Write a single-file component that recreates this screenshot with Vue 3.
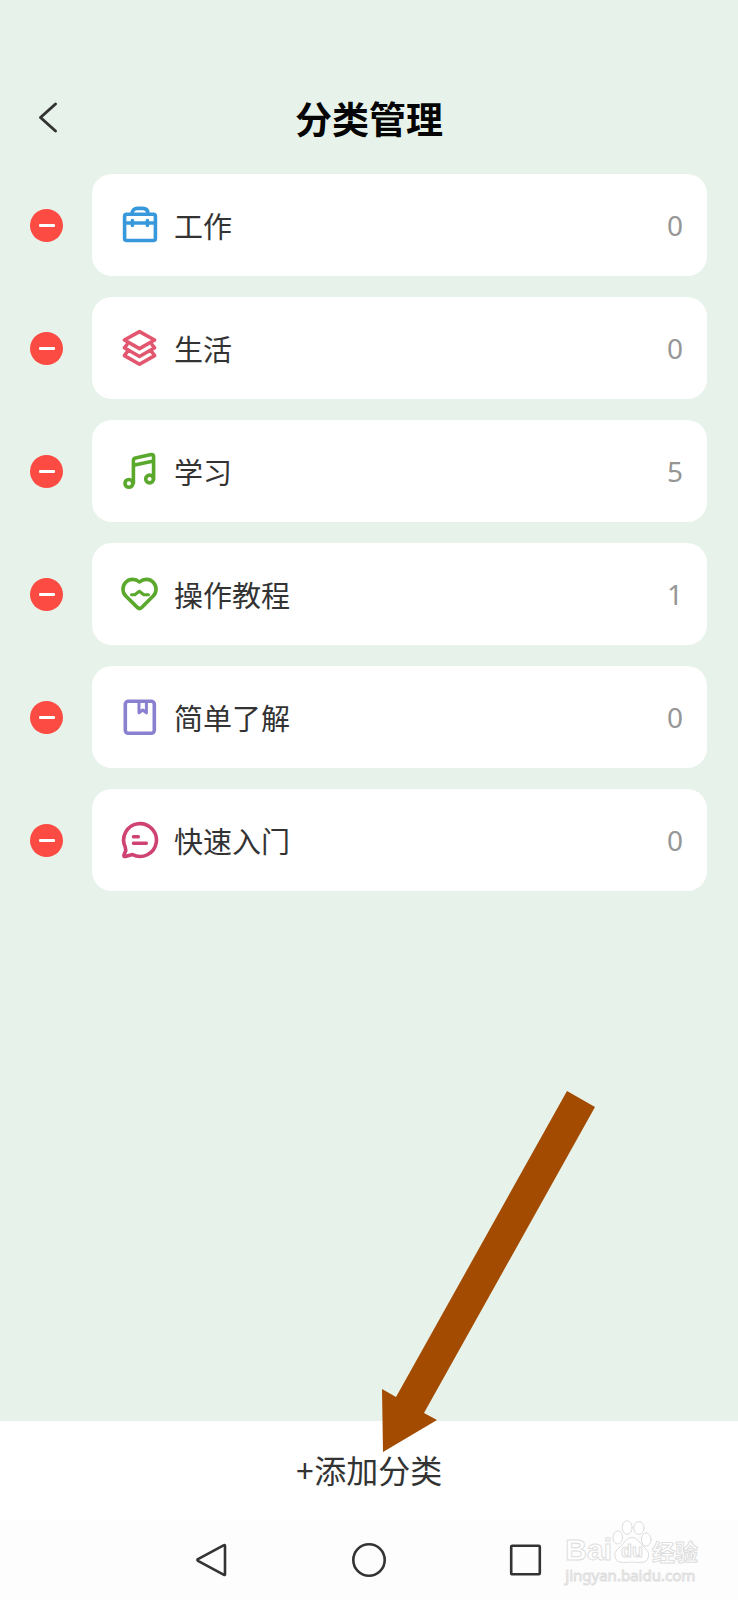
<script setup>
import { ref } from 'vue'

const categories = ref([
  { id: 'work', name: '工作', count: 0 },
  { id: 'life', name: '生活', count: 0 },
  { id: 'study', name: '学习', count: 5 },
  { id: 'guide', name: '操作教程', count: 1 },
  { id: 'basics', name: '简单了解', count: 0 },
  { id: 'start', name: '快速入门', count: 0 },
])

function removeCategory(id) {
  categories.value = categories.value.filter((c) => c.id !== id)
}
</script>

<template>
  <div class="page">
    <header class="header">
      <button class="back" type="button" aria-label="返回">
        <svg viewBox="0 0 24 34" width="24" height="34">
          <path d="M19.5 3 4.5 16.5 19.5 30" />
        </svg>
      </button>
      <h1 class="title">分类管理</h1>
    </header>

    <main class="main">
      <ul class="list">
        <li v-for="c in categories" :key="c.id" class="row">
          <button class="remove" type="button" :aria-label="'删除' + c.name" @click="removeCategory(c.id)"></button>
          <div class="card">
            <svg class="icon" :class="c.id" viewBox="0 0 40 40" aria-hidden="true">
              <g v-if="c.id === 'work'">
                <rect x="4.6" y="9.3" width="30.8" height="26.2" rx="2" />
                <path d="M12 9C12 5.2 14.4 3.4 17.4 3.4H22.6C25.8 3.4 28 5.2 28 9M5 18H35M12.4 15.6V20.4M27.4 15.6V20.4" />
              </g>
              <g v-else-if="c.id === 'life'">
                <path d="M19.5 3.6 34.6 12 19.5 20.6 4.4 12Z" />
                <path d="M7 16.6 4.4 19.8 19.5 28.5 34.6 19.8 32 16.6M7 24.2 4.4 27.6 19.5 36.3 34.6 27.6 32 24.2" />
              </g>
              <g v-else-if="c.id === 'study'">
                <circle cx="8.9" cy="32.4" r="3.9" />
                <circle cx="29.6" cy="28" r="3.9" />
                <path d="M13.4 32V9.5Q13.4 7.4 15.4 7L31.2 3.6Q33.6 3.2 33.6 5.5V28M13.4 14.2 33.6 10" />
              </g>
              <g v-else-if="c.id === 'guide'">
                <path d="M19.5 8C15.5 4.5 9.5 4.3 5.8 8.2 2 12.3 2 18 5.8 22L17.3 33.4Q19.5 35.6 21.7 33.4L33.2 22C37 18 37 12.3 33.2 8.2 29.5 4.3 23.5 4.5 19.5 8Z" />
                <path class="fine" d="M11.5 20.7H14.8L19.3 17.2 23.8 20.7H28.5" />
              </g>
              <g v-else-if="c.id === 'basics'">
                <rect x="5.3" y="4.3" width="29" height="32" rx="3" />
                <path class="fine" d="M19 4.5V15.8L22.7 13 26.4 15.8V4.5" />
              </g>
              <g v-else>
                <path d="M5.2 27A16.4 16.4 0 1 1 12.5 34.6L5.3 36.5Q3.6 36.8 3.9 35.2L5.8 30.5Z" />
                <path d="M13.5 16.8H18.3M13.5 23.3H26.3" />
              </g>
            </svg>
            <span class="name">{{ c.name }}</span>
            <span class="count">{{ c.count }}</span>
          </div>
        </li>
      </ul>
    </main>

    <footer class="footer">
      <button class="add" type="button">+添加分类</button>
      <nav class="nav" aria-label="系统导航">
        <button type="button" aria-label="后退">
          <svg viewBox="0 0 36 36" width="36" height="36">
            <path d="M30 3.2Q31 2.6 31 3.8V32.2Q31 33.4 30 32.8L4 18.8Q2.8 18 4 17.2Z" />
          </svg>
        </button>
        <button type="button" aria-label="主页">
          <svg viewBox="0 0 36 36" width="36" height="36"><circle cx="18" cy="18" r="15.7" /></svg>
        </button>
        <button type="button" aria-label="最近任务">
          <svg viewBox="0 0 36 36" width="36" height="36"><rect x="3.2" y="3.7" width="28.6" height="28.6" rx="1" /></svg>
        </button>
      </nav>

      <svg class="arrow" viewBox="0 0 213 361" aria-hidden="true">
        <path d="M185 0 213 16 42 322 55 329 1 361 0 298 14 306Z" />
      </svg>

      <div class="mark">
        <div class="brand">
          <span class="bai">Bai</span>
          <span class="paw">
            <svg viewBox="0 0 40 44" width="40" height="44" aria-hidden="true">
              <ellipse cx="5.8" cy="17.5" rx="4.8" ry="6.5" />
              <ellipse cx="15.2" cy="7.5" rx="5" ry="6.8" />
              <ellipse cx="27" cy="8" rx="5" ry="6.5" />
              <ellipse cx="34.2" cy="19.5" rx="4.8" ry="6.5" />
              <path d="M20 17.5C14.5 17.5 13 22.5 9 26 2.5 31.5 2 34 3.5 38 5.5 43.5 11 42.6 20 42 29 42.6 34.5 43.5 36 38 37.5 33.5 36.5 31 31 26 27 22.5 25.5 17.5 20 17.5Z" />
            </svg>
            <span class="du">du</span>
          </span>
          <span class="jy">经验</span>
        </div>
        <div class="url">jingyan.baidu.com</div>
      </div>
    </footer>
  </div>
</template>

<style>
body {
  background: #e7f3ea;
}
</style>

<style scoped>
.page {
  display: flex;
  flex-direction: column;
  min-height: 100vh;
  background: #e7f3ea;
  color: #333;
  font-family: "Noto Sans", "Noto Sans CJK SC", sans-serif;
}

button {
  border: 0;
  padding: 0;
  margin: 0;
  background: none;
  color: inherit;
  font: inherit;
  cursor: pointer;
}

svg {
  display: block;
  fill: none;
  stroke: currentColor;
  stroke-width: 3;
  stroke-linecap: round;
  stroke-linejoin: round;
}

.header {
  display: grid;
  grid-template-columns: 48px 1fr 48px;
  align-items: center;
  height: 112px;
  padding: 62px 36px 0;
}

.title {
  margin: 0;
  color: #050505;
  font-family: "Noto Sans CJK SC", sans-serif;
  font-size: 37px;
  line-height: 48px;
  font-weight: 700;
  text-align: center;
}

.main {
  flex: 1;
}

.list {
  display: flex;
  flex-direction: column;
  gap: 21px;
  margin: 0;
  padding: 0 31px 21px 30px;
  list-style: none;
}

.row {
  display: flex;
  align-items: center;
  gap: 29px;
}

.remove {
  display: flex;
  flex: none;
  align-items: center;
  justify-content: center;
  width: 33px;
  height: 33px;
  border-radius: 50%;
  background: #fb4b42;
}

.remove::before {
  content: "";
  width: 16px;
  height: 3px;
  border-radius: 1px;
  background: #fff;
}

.card {
  display: flex;
  flex: 1;
  align-items: center;
  gap: 14px;
  height: 102px;
  padding: 0 24px 0 28px;
  border-radius: 20px;
  box-sizing: border-box;
  background: #fff;
  font-size: 29px;
  line-height: 40px;
}

.icon {
  flex: none;
  width: 40px;
  height: 40px;
  stroke-width: 3.6;
}

.fine {
  stroke-width: 3;
}

.work { color: #3898dc; }
.life { color: #e2576f; }
.study { color: #5aa82c; }
.guide { color: #5aa82c; }
.basics { color: #8a80d0; }
.start { color: #cf4374; }

.name {
  flex: 1;
  font-family: "Noto Sans CJK SC", sans-serif;
}

.count {
  color: #969696;
  font-size: 28px;
}

.footer {
  position: relative;
  background: #fff;
}

.add {
  display: block;
  width: 100%;
  height: 100px;
  font-size: 32px;
  line-height: 48px;
}

.nav {
  display: grid;
  grid-template-columns: repeat(3, 1fr);
  height: 77px;
  padding: 0 18% 2px;
  background: #fdfdfd;
}

.nav button {
  display: flex;
  align-items: center;
  justify-content: center;
}

.nav svg {
  stroke-width: 2.6;
}

.arrow {
  position: absolute;
  left: calc(50% + 13px);
  bottom: 148px;
  width: 213px;
  height: 361px;
  fill: #a34b00;
  stroke: none;
  pointer-events: none;
}

.mark {
  position: absolute;
  right: 40px;
  bottom: 14px;
  color: #fff;
  font-family: "Liberation Sans", "Noto Sans CJK SC", sans-serif;
  font-weight: 700;
  pointer-events: none;
  -webkit-text-stroke: 1px #dedede;
}

.brand {
  display: flex;
  align-items: flex-end;
}

.bai {
  font-size: 30px;
  line-height: 28px;
}

.paw {
  position: relative;
}

.paw svg {
  fill: #fff;
  stroke: #dcdcdc;
  stroke-width: 1;
}

.du {
  position: absolute;
  left: 0;
  right: 0;
  bottom: 1px;
  font-size: 18px;
  line-height: 24px;
  text-align: center;
}

.jy {
  font-family: "Noto Sans CJK SC", sans-serif;
  font-size: 23px;
  line-height: 26px;
}

.url {
  font-family: "Noto Sans", sans-serif;
  font-size: 15px;
  line-height: 22px;
  font-weight: 400;
}
</style>
